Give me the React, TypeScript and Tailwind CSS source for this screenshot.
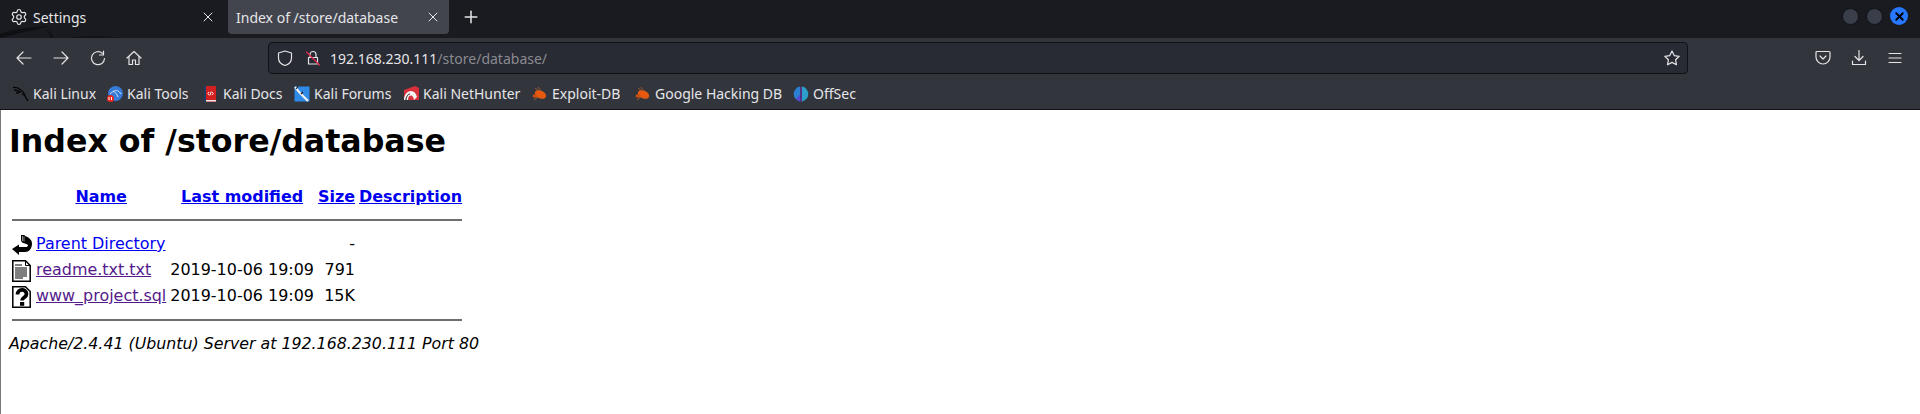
import { Plus, Settings, X } from "lucide-react";
import type { ReactNode } from "react";

const uiFont = "font-['Noto_Sans','Open_Sans',sans-serif]";

function Glyph({ children }: { children: ReactNode }) {
  return (
    <svg width="16" height="16" viewBox="0 0 16 16" fill="none" stroke="#e4e4e6" strokeWidth="1.200" strokeLinecap="round" strokeLinejoin="round" className="block shrink-0">
      {children}
    </svg>
  );
}

function KaliIcon() {
  return (
    <svg width="16" height="16" viewBox="0 0 16 16" fill="none" stroke="#050505" strokeWidth="1.300">
      <path d="M0 1.500c3-.5 6 .5 8 2.500 2 1.500 3.500 3 4 5.500 .3 1.500 1 3 3 5.500" />
      <path d="M1 4c2 .2 4 .5 5.500 1.500 M8 5.500c-1.500 1-3.500 1.500-5 1.500 M12 9c-1.500 0-2.500-.5-3-1.500" />
    </svg>
  );
}

function ToolsIcon() {
  return (
    <svg width="16" height="16" viewBox="0 0 16 16">
      <circle cx="8.500" cy="7.500" r="7.500" fill="#367bd8" />
      <path d="M3 8c3-3 6-4 8-3 1 .5 2 1.500 3 3 M6 5c2 1 4 3 5 6" fill="none" stroke="#cfe3fb" strokeWidth="1" />
      <rect x="0" y="9" width="7" height="7" rx="3.500" fill="#e8271f" />
      <path d="M2 11v3 M4.500 11v3" stroke="#fff" strokeWidth="1" />
    </svg>
  );
}

function DocsIcon() {
  return (
    <svg width="14" height="16" viewBox="0 0 14 16">
      <rect x="1" y="0" width="12" height="16" fill="#d21f1f" />
      <rect x="1" y="0" width="2" height="16" fill="#1f3b66" />
      <rect x="3" y="14" width="10" height="1.500" fill="#e8e8e8" />
      <path d="M6 6 4.800 7.500 6 9 M9 6l1.200 1.500L9 9 M8.200 5.500 6.800 9.500" fill="none" stroke="#fff" strokeWidth="0.900" />
    </svg>
  );
}

function ForumsIcon() {
  return (
    <svg width="16" height="16" viewBox="0 0 16 16">
      <rect x="0.500" y="0.500" width="15" height="15" fill="#2f8ae6" />
      <path d="M1 1 6 7l3 3 5 5" fill="none" stroke="#f2f2f2" strokeWidth="2.200" />
      <path d="M4 .5 2 3 M7 8l2-2" stroke="#1b1b1b" strokeWidth="1.200" />
    </svg>
  );
}

function HunterIcon() {
  return (
    <svg width="16" height="16" viewBox="0 0 16 16">
      <path d="M1 4 12 0l4 2v12H1z" fill="#d9303c" />
      <path d="M1 14c0-5 3-9 7-9 3 0 5 2 6 6l-3 3c-.5-3-1.500-4.500-3-4.500-2 0-3 2-3 4.500z" fill="#f4f4f4" />
      <path d="M3 14c0-3 2-6 4-6" fill="none" stroke="#151515" strokeWidth="1" />
    </svg>
  );
}

function ExploitIcon() {
  return (
    <svg width="16" height="14" viewBox="0 0 16 14">
      <ellipse cx="8.500" cy="7.500" rx="6" ry="3.800" fill="#e8590f" transform="rotate(25 8.500 7.500)" />
      <ellipse cx="3" cy="9" rx="2.500" ry="1.800" fill="#c9500f" />
      <path d="M3 1l4 3 M6 0l3 4 M2 13l4-3 M12 12l-2-2" stroke="#a85a2c" strokeWidth="0.900" />
    </svg>
  );
}

function OffSecIcon() {
  return (
    <svg width="16" height="16" viewBox="0 0 16 16">
      <path d="M7 .6A7.500 7.500 0 0 0 7 15.400z" fill="#2a7fd0" />
      <path d="M9 .6a7.500 7.500 0 0 1 0 14.800z" fill="#2b9fc9" />
      <rect x="7.500" y="1" width="1" height="15" fill="#6a35c9" />
      <path d="M3 13a7.500 7.500 0 0 0 4 2.400V9z" fill="#5a45cf" />
    </svg>
  );
}

function BackIcon() {
  return (
    <svg width="20" height="22" viewBox="0 0 20 22" className="block">
      <path d="M0 15 7 10.500v2.500h6.500c1.500 0 2.500-.7 2.500-1.500S15 10 13 9.500c-3-.5-4-2-4-3.500V1h3.500l.5 1c3.500 1 7 3.500 7 7.500 0 5-3 8.500-7 8.500H7v3z" fill="#000" />
      <path d="M10.500 2v5 M12 2.500v5" stroke="#b5b5b5" strokeWidth="0.800" />
    </svg>
  );
}

function TextFileIcon() {
  return (
    <svg width="20" height="22" viewBox="0 0 20 22" fill="none" stroke="#000" className="block">
      <path d="M.8.8h12.700l4.700 4.700v15.700H.8z" fill="#fff" strokeWidth="1.500" />
      <path d="M13.500.8v4.700h4.700" strokeWidth="1" />
      <path d="M3 5h7 M3 8h12 M3 10h12 M3 12h12 M3 14h12 M3 16h12 M3 18h8" strokeWidth="1.200" />
    </svg>
  );
}

function UnknownFileIcon() {
  return (
    <svg width="20" height="22" viewBox="0 0 20 22" fill="none" className="block">
      <path d="M.8.8h12.700l4.700 4.700v15.700H.8z" fill="#fff" stroke="#000" strokeWidth="1.500" />
      <path d="M5.500 8.500c0-6 9-6 9-.5 0 3.500-4.500 3.500-4.500 6.500" stroke="#000" strokeWidth="3.800" />
      <rect x="8" y="16" width="4.200" height="3.800" fill="#000" />
    </svg>
  );
}

const bookmarks = [
  { label: "Kali Linux", icon: <KaliIcon />, width: "w-[94px]" },
  { label: "Kali Tools", icon: <ToolsIcon />, width: "w-[96px]" },
  { label: "Kali Docs", icon: <DocsIcon />, width: "w-[91px]" },
  { label: "Kali Forums", icon: <ForumsIcon />, width: "w-[109px]" },
  { label: "Kali NetHunter", icon: <HunterIcon />, width: "w-[129px]" },
  { label: "Exploit-DB", icon: <ExploitIcon />, width: "w-[103px]" },
  { label: "Google Hacking DB", icon: <ExploitIcon />, width: "w-[158px]" },
  { label: "OffSec", icon: <OffSecIcon />, width: "w-[60px]" },
];

const linkBlue = "text-[#0000ee] underline";
const linkVisited = "text-[#551a8b] underline";

export default function App() {
  return (
    <div className="flex h-[414px] w-[1920px] flex-col overflow-hidden bg-white">
      <div className={`relative flex h-[38px] shrink-0 items-start bg-[#1a1b20] text-[#e6e6e8] ${uiFont} text-[14px]`}>
        <svg width="130" height="16" viewBox="0 0 130 16" className="absolute bottom-0 left-0">
          <path d="M0 12C14 7 30 5 48 4 40 7 24 10 0 16z" fill="#0f1013" />
          <path d="M46 7c4 2 7 5 8 9h-4c-1-3-2-6-4-9zM70 16c14-3 30-3 50 0z" fill="#121317" />
        </svg>
        <div className="relative flex h-[34px] w-[228px] items-center pl-[10px] pr-[12px]">
          <Settings size={18} strokeWidth={1.600} />
          <span className="ml-[5px] flex-1">Settings</span>
          <X size={16} strokeWidth={1.500} />
        </div>
        <div className="relative flex h-[34px] w-[221px] items-center rounded-b-[4px] bg-[#42444e] pl-[8px] pr-[8px]">
          <span className="flex-1">Index of /store/database</span>
          <X size={16} strokeWidth={1.500} />
        </div>
        <div className="flex h-[34px] w-[44px] items-center justify-center">
          <Plus size={20} strokeWidth={1.800} />
        </div>
        <div className="ml-auto flex h-[32px] items-center gap-[7px] pr-[12px]">
          <span className="h-[17px] w-[17px] rounded-full border border-[#101115] bg-[#3a3e4b]" />
          <span className="h-[17px] w-[17px] rounded-full border border-[#101115] bg-[#3a3e4b]" />
          <span className="flex h-[18px] w-[18px] items-center justify-center rounded-full bg-[#2777ff] text-black">
            <X size={13} strokeWidth={3.500} />
          </span>
        </div>
      </div>

      <div className="flex h-[40px] shrink-0 items-center bg-[#33353d] text-[#e6e6e8]">
        <div className="flex w-[268px] items-center pl-[16px]">
          <Glyph>
            <path d="M1 8h14 M7 2 1 8l6 6" />
          </Glyph>
          <span className="ml-[21px]">
            <Glyph>
              <path d="M1 8h14 M9 2l6 6-6 6" />
            </Glyph>
          </span>
          <span className="ml-[21px]">
            <Glyph>
              <path d="M14.500 8.500a6.500 6.500 0 1 1-2.200-5.200" />
              <path d="M13.500 1v4h-4" />
            </Glyph>
          </span>
          <span className="ml-[20px]">
            <Glyph>
              <path d="M1 8 8 1.500 15 8" />
              <path d="M3 6.500v8h3.500v-4.500h3v4.500H13v-8" />
            </Glyph>
          </span>
        </div>
        <div className={`flex h-[32px] w-[1420px] items-center rounded-[4px] border border-[#111216] bg-[#282a34] pl-[8px] pr-[7px] ${uiFont} text-[14px]`}>
          <Glyph>
            <path d="M8 1 14.500 3v5c0 4-3 6.500-6.500 7.500C4.500 14.500 1.500 12 1.500 8V3z" />
          </Glyph>
          <span className="ml-[12px]">
            <svg width="16" height="16" viewBox="0 0 16 16" fill="none" strokeLinecap="round" className="block">
              <path d="M5 7V4.500a3 3 0 0 1 6 0V7 M3.500 7.500h9v6.500h-9z" stroke="#e4e4e6" strokeWidth="1.200" strokeLinejoin="round" />
              <path d="m1.500 2 13 13" stroke="#e22850" strokeWidth="1.200" />
            </svg>
          </span>
          <span className="ml-[9px] text-[#e6e6e8]">192.168.230.111</span>
          <span className="text-[#8a8b90]">/store/database/</span>
          <span className="ml-auto">
            <Glyph>
              <path d="m8 1 2.200 4.600 5 .7-3.600 3.500.9 5L8 12.400l-4.500 2.400.9-5L.8 6.300l5-.7z" />
            </Glyph>
          </span>
        </div>
        <div className="ml-[127px] flex items-center">
          <Glyph>
            <path d="M2 1.500h12a1 1 0 0 1 1 1V7A7 7 0 0 1 1 7V2.500a1 1 0 0 1 1-1z" />
            <path d="m5 6 3 3 3-3" />
          </Glyph>
          <span className="ml-[20px]">
            <Glyph>
              <path d="M8 .5v10 M4 6.500l4 4 4-4 M1.500 11v3.500h13V11" />
            </Glyph>
          </span>
          <span className="ml-[20px]">
            <Glyph>
              <path d="M2 3.500h12 M2 8h12 M2 12.500h12" />
            </Glyph>
          </span>
        </div>
      </div>

      <div className={`flex h-[32px] shrink-0 items-center border-b border-[#101114] bg-[#33353d] pl-[13px] text-[14px] text-[#e6e6e8] ${uiFont}`}>
        {bookmarks.map((b) => (
          <div key={b.label} className={`flex items-center gap-[4px] ${b.width}`}>
            <span className="flex w-[16px] justify-start">{b.icon}</span>
            <span className="whitespace-nowrap">{b.label}</span>
          </div>
        ))}
      </div>

      <main className="flex-1 border-l border-[#7a7a7a] bg-white pl-[8px] font-['DejaVu_Sans',sans-serif] text-black">
        <h1 className="mt-[12px] text-[31.650px] leading-[38px] font-bold">Index of /store/database</h1>
        <table className="mt-[24px] border-separate border-spacing-[2px] text-[15.950px] leading-[19px]">
          <thead>
            <tr className="h-[19px] font-bold">
              <th className="w-[20px] p-[1px]"></th>
              <th className="p-[1px]"><a className={linkBlue}>Name</a></th>
              <th className="p-[1px]"><a className={linkBlue}>Last modified</a></th>
              <th className="p-[1px]"><a className={linkBlue}>Size</a></th>
              <th className="p-[1px]"><a className={linkBlue}>Description</a></th>
            </tr>
            <tr>
              <th colSpan={5} className="p-[1px]"><div className="my-[9px] h-[2px] bg-[#6e6e6e]" /></th>
            </tr>
          </thead>
          <tbody className="align-top">
            <tr>
              <td className="p-[1px]"><BackIcon /></td>
              <td className="p-[1px]"><a className={linkBlue}>Parent Directory</a></td>
              <td className="p-[1px]"></td>
              <td className="p-[1px] text-right">-</td>
              <td className="p-[1px]"></td>
            </tr>
            <tr>
              <td className="p-[1px]"><TextFileIcon /></td>
              <td className="p-[1px]"><a className={linkVisited}>readme.txt.txt</a></td>
              <td className="p-[1px] text-right">2019-10-06 19:09</td>
              <td className="p-[1px] text-right">791</td>
              <td className="p-[1px]"></td>
            </tr>
            <tr>
              <td className="p-[1px]"><UnknownFileIcon /></td>
              <td className="p-[1px]"><a className={linkVisited}>www_project.sql</a></td>
              <td className="p-[1px] text-right">2019-10-06 19:09</td>
              <td className="p-[1px] text-right">15K</td>
              <td className="p-[1px]"></td>
            </tr>
            <tr>
              <th colSpan={5} className="p-[1px]"><div className="my-[7px] h-[2px] bg-[#6e6e6e]" /></th>
            </tr>
          </tbody>
        </table>
        <address className="mt-[1px] text-[15.800px] italic">Apache/2.4.41 (Ubuntu) Server at 192.168.230.111 Port 80</address>
      </main>
    </div>
  );
}
